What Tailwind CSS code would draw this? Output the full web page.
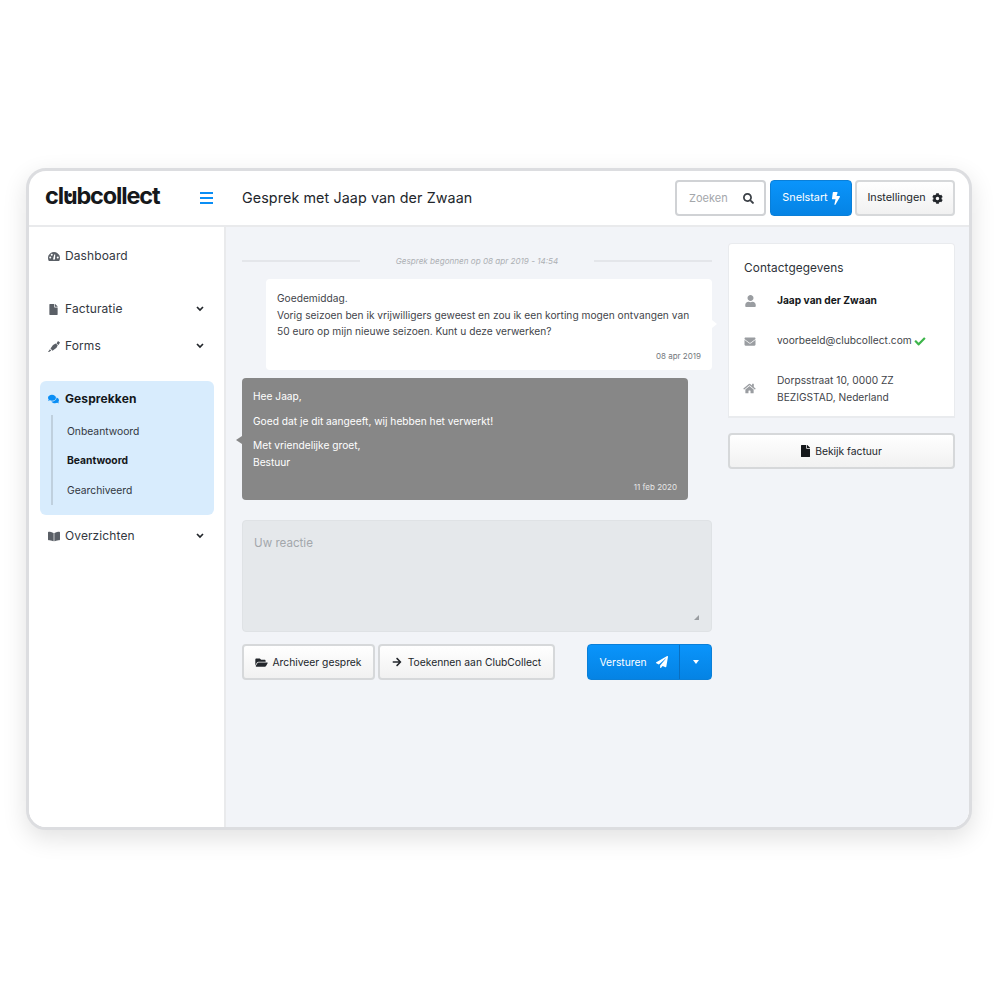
<!DOCTYPE html>
<html lang="nl">
<head>
<meta charset="utf-8">
<title>Gesprek</title>
<script src="https://cdn.jsdelivr.net/npm/@tailwindcss/browser@4"></script>
</head>
<body class="bg-white font-['Inter',sans-serif] text-[#33383f]">
<div class="w-[1000px] h-[1000px] pt-[168px] pl-[26px]">
  <div class="w-[946px] h-[662px] border-[3px] border-[#dcdde0] rounded-[20px] bg-white overflow-hidden shadow-[0_8px_24px_rgba(0,0,0,0.12)] flex flex-col">
    <header class="h-[56px] shrink-0 flex items-center border-b-2 border-[#e9eaec]">
      <div class="w-[172px] pl-[16px] text-[23.500px] font-bold tracking-[-1.150px] text-[#16181b] leading-none relative top-[-2px]">cl<span class="relative">u<span class="absolute left-[5px] top-[12px] w-[4px] h-[4px] rounded-full bg-[#16181b]"></span></span>bcollect</div>
      <svg class="w-[13px] h-[12px] ml-[-1px]" viewBox="0 0 13 12"><path d="M0 1h13M0 6h13M0 11h13" stroke="#0a8ef5" stroke-width="2"/></svg>
      <h1 class="ml-[29px] text-[14.300px] tracking-[0.1px] text-[#22262b]">Gesprek met Jaap van der Zwaan</h1>
      <div class="ml-auto mr-[14px] flex gap-[3px] items-center">
        <div class="w-[91px] h-[36px] mr-[1px] rounded-[4px] border-2 border-[#d0d2d5] bg-white flex items-center justify-between pl-[12px] pr-[10px] text-[11px] text-[#a4a7ab]">
          <span class="pt-[1px]">Zoeken</span>
          <svg class="w-[11px] h-[11px]" viewBox="0 0 512 512" fill="#3b4046"><path d="M505 442.700L405.300 343c-4.500-4.500-10.600-7-17-7H372c27.600-35.300 44-79.700 44-128C416 93.100 322.900 0 208 0S0 93.100 0 208s93.100 208 208 208c48.300 0 92.700-16.400 128-44v16.300c0 6.400 2.500 12.500 7 17l99.700 99.700c9.400 9.400 24.600 9.400 33.900 0l28.300-28.300c9.400-9.400 9.400-24.600.1-34zM208 336c-70.700 0-128-57.200-128-128 0-70.700 57.200-128 128-128 70.700 0 128 57.200 128 128 0 70.700-57.200 128-128 128z"/></svg>
        </div>
        <div class="w-[82px] h-[36px] rounded-[4px] bg-gradient-to-b from-[#0a94fb] to-[#0583e4] border border-[#0a7fd8] flex items-center justify-center gap-[4px] text-[10.800px] text-white">
          <span class="pt-[1px]">Snelstart</span>
          <svg class="w-[8px] h-[13px]" viewBox="0 0 320 512" fill="#fff"><path d="M296 160H180.600l42.600-129.800C227.200 15 215.700 0 200 0H56C44 0 33.800 8.900 32.200 20.800l-32 240C-1.700 275.200 9.500 288 24 288h118.700L96.600 482.500c-3.600 15.200 8 29.500 23.300 29.500 8.400 0 16.400-4.400 20.800-12l176-304c9.300-15.900-2.200-36-20.700-36z"/></svg>
        </div>
        <div class="w-[100px] h-[36px] rounded-[4px] border-2 border-[#d6d8da] bg-gradient-to-b from-white to-[#f1f1f1] flex items-center justify-center gap-[6px] text-[10.800px] text-[#22262b]">
          <span class="pt-[1px]">Instellingen</span>
          <svg class="w-[11px] h-[11px]" viewBox="0 0 512 512" fill="#22262b"><path d="M487.400 315.700l-42.600-24.600c4.300-23.200 4.300-47 0-70.200l42.600-24.600c4.900-2.800 7.100-8.600 5.500-14-11.100-35.600-30-67.800-54.700-94.600-3.800-4.100-10-5.100-14.800-2.300L380.800 110c-17.900-15.400-38.500-27.300-60.800-35.100V25.800c0-5.600-3.900-10.500-9.400-11.700-36.700-8.200-74.300-7.800-109.200 0-5.500 1.200-9.400 6.100-9.400 11.700V75c-22.200 7.900-42.800 19.800-60.800 35.100L88.700 85.500c-4.900-2.800-11-1.900-14.800 2.300-24.700 26.700-43.600 58.900-54.700 94.600-1.700 5.400.6 11.200 5.500 14L67.300 221c-4.300 23.200-4.300 47 0 70.200l-42.600 24.600c-4.900 2.800-7.100 8.600-5.500 14 11.100 35.600 30 67.800 54.700 94.600 3.800 4.100 10 5.100 14.800 2.300l42.600-24.600c17.900 15.400 38.500 27.300 60.800 35.100v49.200c0 5.600 3.900 10.500 9.400 11.700 36.700 8.200 74.300 7.800 109.200 0 5.500-1.200 9.400-6.100 9.400-11.700v-49.200c22.200-7.900 42.800-19.800 60.800-35.100l42.600 24.600c4.900 2.800 11 1.900 14.800-2.300 24.700-26.700 43.600-58.900 54.700-94.600 1.500-5.500-.7-11.300-5.600-14.100zM256 336c-44.100 0-80-35.900-80-80s35.900-80 80-80 80 35.900 80 80-35.900 80-80 80z"/></svg>
        </div>
      </div>
    </header>

    <div class="flex flex-1 min-h-0">
      <aside class="w-[197px] shrink-0 border-r-2 border-[#e9eaec] bg-white text-[12px] tracking-[0.1px]">
        <div class="flex items-center h-[20px] mt-[19px] pl-[19px] gap-[5px]">
          <svg class="w-[12px] h-[11px]" viewBox="0 0 24 22" fill="#5a5f66"><path d="M12 2C5.400 2 0 7.400 0 14c0 2.200.6 4.200 1.600 6h20.800c1-1.800 1.600-3.800 1.600-6 0-6.600-5.400-12-12-12zM4.500 15a2 2 0 1 1 0-4 2 2 0 0 1 0 4zm3-5.500a2 2 0 1 1 0-4 2 2 0 0 1 0 4zM14 17h-4l2.500-10h2zm5.500-2a2 2 0 1 1 0-4 2 2 0 0 1 0 4z"/></svg>
          <span>Dashboard</span>
        </div>
        <div class="flex items-center h-[20px] mt-[33px] pl-[19px] gap-[6px]">
          <svg class="w-[11px] h-[11px]" viewBox="0 0 384 512" fill="#5a5f66"><path d="M224 136V0H24C10.700 0 0 10.700 0 24v464c0 13.300 10.700 24 24 24h336c13.300 0 24-10.700 24-24V160H248c-13.200 0-24-10.800-24-24zm160-14.100v6.100H256V0h6.100c6.400 0 12.500 2.500 17 7l97.900 98c4.500 4.500 7 10.600 7 16.900z"/></svg>
          <span>Facturatie</span>
          <svg class="w-[8px] h-[6px] ml-auto mr-[20px]" viewBox="0 0 8 6"><path d="M1 1l3 3 3-3" fill="none" stroke="#22262b" stroke-width="1.700"/></svg>
        </div>
        <div class="flex items-center h-[20px] mt-[17px] pl-[19px] gap-[5px]">
          <svg class="w-[12px] h-[11px]" viewBox="0 0 24 22" fill="#5a5f66"><path d="M20 0l4 3-3 5-4-3zM15.500 5l4 3.500-2.500 5-8 6-4-4.500 5-7zM3.800 16.500l2.700 2.700L2 22H0z"/></svg>
          <span>Forms</span>
          <svg class="w-[8px] h-[6px] ml-auto mr-[20px]" viewBox="0 0 8 6"><path d="M1 1l3 3 3-3" fill="none" stroke="#22262b" stroke-width="1.700"/></svg>
        </div>
        <section class="mx-[11px] mt-[25px] w-[174px] h-[134px] rounded-[6px] bg-[#d8ecfd] pt-[8px]">
          <div class="flex items-center h-[20px] pl-[8px] gap-[6px] font-bold text-[#14171a]">
            <svg class="w-[11px] h-[10px]" viewBox="0 0 576 512" fill="#0a8ef5"><path d="M416 192c0-88.400-93.100-160-208-160S0 103.600 0 192c0 34.300 14.100 65.900 38 92-13.400 30.200-35.500 54.200-35.800 54.500-2.200 2.300-2.800 5.700-1.500 8.700S4.800 352 8 352c36.600 0 66.900-12.300 88.700-25 32.200 15.700 70.300 25 111.300 25 114.900 0 208-71.600 208-160zm122 220c23.900-26 38-57.700 38-92 0-66.900-53.500-124.200-129.300-148.100.9 6.600 1.300 13.300 1.300 20.100 0 105.900-107.700 192-240 192-10.800 0-21.300-.8-31.700-1.900C207.800 439.600 281.800 480 368 480c41 0 79.100-9.200 111.300-25 21.800 12.700 52.100 25 88.700 25 3.200 0 6.100-1.900 7.300-4.800 1.300-2.900.7-6.300-1.500-8.700-.3-.3-22.400-24.200-35.800-54.500z"/></svg>
            <span>Gesprekken</span>
          </div>
          <ul class="ml-[11px] mt-[6px] w-[150px] h-[90px] border-l-2 border-[#bfd0de] pl-[14px] pt-[2px] text-[10.300px] tracking-normal flex flex-col justify-around">
            <li>Onbeantwoord</li>
            <li class="font-bold text-[#14171a]">Beantwoord</li>
            <li>Gearchiveerd</li>
          </ul>
        </section>
        <div class="flex items-center h-[20px] mt-[11px] pl-[19px] gap-[5px]">
          <svg class="w-[12px] h-[11px]" viewBox="0 0 576 512" fill="#5a5f66"><path d="M542.220 32.050c-54.800 3.110-163.720 14.430-230.960 55.590-4.640 2.840-7.270 7.890-7.270 13.170v363.870c0 11.550 12.630 18.850 23.280 13.490 69.180-34.820 169.230-44.320 218.700-46.920 16.890-.89 30.020-14.430 30.020-30.660V62.750c.01-17.710-15.350-31.740-33.770-30.700zM264.730 87.640C197.500 46.480 88.580 35.170 33.780 32.050 15.360 31.010 0 45.040 0 62.750V400.600c0 16.240 13.130 29.780 30.020 30.660 49.490 2.600 149.590 12.110 218.770 46.950 10.620 5.350 23.210-1.940 23.210-13.460V100.630c0-5.290-2.620-10.140-7.270-12.990z"/></svg>
          <span>Overzichten</span>
          <svg class="w-[8px] h-[6px] ml-auto mr-[20px]" viewBox="0 0 8 6"><path d="M1 1l3 3 3-3" fill="none" stroke="#22262b" stroke-width="1.700"/></svg>
        </div>
      </aside>

      <main class="flex-1 bg-[#f2f4f8] pl-[16px] flex gap-[16px]">
        <div class="w-[470px] shrink-0 flex flex-col">
          <div class="flex items-center mt-[24px] h-[20px] text-[8.100px] italic text-[#adb0b4] justify-between">
            <span class="w-[118px] h-[2px] bg-[#e4e6ea]"></span>
            <span>Gesprek begonnen op 08 apr 2019 - 14:54</span>
            <span class="w-[118px] h-[2px] bg-[#e4e6ea]"></span>
          </div>
          <div class="relative ml-[24px] w-[446px] h-[91px] mt-[8px] rounded-[4px] bg-white pl-[11px] pt-[11px] text-[10.200px] leading-[16.500px] text-[#3f444a]">
            <p>Goedemiddag.</p>
            <p>Vorig seizoen ben ik vrijwilligers geweest en zou ik een korting mogen ontvangen van</p>
            <p>50 euro op mijn nieuwe seizoen. Kunt u deze verwerken?</p>
            <p class="absolute right-[11px] bottom-[6px] text-[8px] text-[#74787d]">08 apr 2019</p>
            <span class="absolute right-[-5px] top-[41px] border-y-[4px] border-l-[5px] border-y-transparent border-l-white"></span>
          </div>
          <div class="relative w-[446px] h-[122px] mt-[8px] rounded-[4px] bg-[#878787] pl-[11px] pt-[10px] text-[10.200px] leading-[16.500px] text-white">
            <p>Hee Jaap,</p>
            <p class="mt-[8px]">Goed dat je dit aangeeft, wij hebben het verwerkt!</p>
            <p class="mt-[8px]">Met vriendelijke groet,</p>
            <p>Bestuur</p>
            <p class="absolute right-[11px] bottom-[5px] text-[8px] text-[#e6e6e6]">11 feb 2020</p>
            <span class="absolute left-[-6px] top-[58px] border-y-[4px] border-r-[6px] border-y-transparent border-r-[#878787]"></span>
          </div>
          <div class="relative w-[470px] h-[112px] mt-[20px] rounded-[4px] bg-[#e5e8eb] border border-[#dfe2e5] pl-[11px] pt-[14px] text-[11.600px] text-[#a3a7ab]">
            Uw reactie
            <svg class="absolute right-[12px] bottom-[11px] w-[5px] h-[5px]" viewBox="0 0 5 5"><path d="M5 0v5H0z" fill="#9a9da1"/></svg>
          </div>
          <div class="flex mt-[12px] gap-[3px] text-[10.300px] text-[#22262b]">
            <div class="w-[133px] h-[36px] rounded-[4px] border-2 border-[#d6d8da] bg-gradient-to-b from-white to-[#f1f1f1] flex items-center justify-center gap-[4px]">
              <svg class="w-[13px] h-[11px]" viewBox="0 0 576 512" fill="#22262b"><path d="M572.694 292.093L500.270 416.248A63.997 63.997 0 0 1 444.989 448H45.025c-18.523 0-30.064-20.093-20.731-36.093l72.424-124.155A64 64 0 0 1 152 256h399.964c18.523 0 30.064 20.093 20.730 36.093zM152 224h328v-48c0-26.510-21.490-48-48-48H272l-64-64H48C21.490 64 0 85.490 0 112v278.046l69.077-118.418C86.214 242.250 117.989 224 152 224z"/></svg>
              <span class="pt-[1px]">Archiveer gesprek</span>
            </div>
            <div class="w-[177px] h-[36px] rounded-[4px] border-2 border-[#d6d8da] bg-gradient-to-b from-white to-[#f1f1f1] flex items-center justify-center gap-[6px]">
              <svg class="w-[10px] h-[10px]" viewBox="0 0 448 512" fill="#22262b"><path d="M190.500 66.900l22.200-22.200c9.400-9.400 24.600-9.400 33.900 0L441 239c9.400 9.400 9.400 24.600 0 33.900L246.600 467.300c-9.400 9.400-24.600 9.400-33.900 0l-22.200-22.200c-9.500-9.500-9.300-25 .4-34.300L311.400 296H24c-13.300 0-24-10.700-24-24v-32c0-13.300 10.700-24 24-24h287.400L190.900 101.200c-9.800-9.300-10-24.800-.4-34.300z"/></svg>
              <span class="pt-[1px]">Toekennen aan ClubCollect</span>
            </div>
            <div class="ml-[29px] w-[125px] h-[36px] rounded-[4px] bg-gradient-to-b from-[#0a94fb] to-[#0583e4] border border-[#0a7fd8] flex text-white">
              <div class="w-[92px] flex items-center justify-center gap-[9px] border-r border-[#0a6fc0]">
                <span class="pt-[1px]">Versturen</span>
                <svg class="w-[12px] h-[12px]" viewBox="0 0 512 512" fill="#fff"><path d="M476 3.200L12.500 270.600c-18.100 10.400-15.800 35.600 2.200 43.200L121 358.400l287.300-253.200c5.500-4.900 13.300 2.600 8.600 8.300L176 407v80.500c0 23.600 28.500 32.900 42.500 15.800L282 426l124.600 52.200c14.200 6 30.400-2.900 33-18.200l72-432C515 7.800 493.300-6.800 476 3.200z"/></svg>
              </div>
              <div class="flex-1 flex items-center justify-center">
                <span class="border-x-[3.500px] border-t-[4px] border-x-transparent border-t-white"></span>
              </div>
            </div>
          </div>
        </div>

        <div class="w-[227px] shrink-0 pt-[16px]">
          <div class="h-[175px] rounded-t-[4px] bg-white border border-[#e9ebee] border-b-2 overflow-hidden pl-[15px] pt-[16px] text-[10.200px] text-[#3f444a]">
            <h2 class="text-[11.800px] leading-[16px] text-[#2d3238] tracking-[0.1px]">Contactgegevens</h2>
            <div class="flex items-center mt-[17px] h-[16px]">
              <svg class="w-[11px] h-[12px] ml-[1px]" viewBox="0 0 448 512" fill="#9a9da1"><path d="M224 256c70.700 0 128-57.300 128-128S294.700 0 224 0 96 57.300 96 128s57.300 128 128 128zm89.600 32h-16.700c-22.200 10.200-46.900 16-72.900 16s-50.600-5.800-72.900-16h-16.700C60.200 288 0 348.200 0 422.400V464c0 26.500 21.500 48 48 48h352c26.500 0 48-21.500 48-48v-41.600c0-74.200-60.200-134.400-134.400-134.400z"/></svg>
              <span class="ml-[21px] font-bold text-[#14171a]">Jaap van der Zwaan</span>
            </div>
            <div class="flex items-center mt-[24px] h-[16px]">
              <svg class="w-[12px] h-[11px]" viewBox="0 0 512 512" fill="#9a9da1"><path d="M502.300 190.800c3.900-3.100 9.700-.2 9.700 4.700V400c0 26.500-21.500 48-48 48H48c-26.500 0-48-21.500-48-48V195.600c0-5 5.700-7.800 9.700-4.700 22.400 17.400 52.100 39.500 154.100 113.600 21.100 15.400 56.700 47.800 92.200 47.600 35.700.3 72-32.800 92.300-47.600 102-74.100 131.600-96.300 154-113.700zM256 320c23.200.4 56.600-29.200 73.400-41.400 132.700-96.300 142.800-104.700 173.400-128.700 5.800-4.500 9.200-11.500 9.200-18.900v-19c0-26.500-21.500-48-48-48H48C21.500 64 0 85.500 0 112v19c0 7.400 3.400 14.300 9.200 18.900 30.600 23.900 40.700 32.400 173.400 128.700 16.800 12.200 50.200 41.800 73.400 41.400z"/></svg>
              <span class="ml-[21px]">voorbeeld@clubcollect.com</span>
              <svg class="w-[12px] h-[11px] ml-[2px]" viewBox="0 0 512 512" fill="#3cb54a"><path d="M173.898 439.404l-166.400-166.400c-9.997-9.997-9.997-26.206 0-36.204l36.203-36.204c9.997-9.998 26.207-9.998 36.204 0L192 312.690 432.095 72.596c9.997-9.997 26.207-9.997 36.204 0l36.203 36.204c9.997 9.997 9.997 26.206 0 36.204l-294.400 294.401c-9.998 9.997-26.207 9.997-36.204-.001z"/></svg>
            </div>
            <div class="flex items-center mt-[23px]">
              <svg class="w-[13px] h-[11px] ml-[-1px]" viewBox="0 0 576 512" fill="#9a9da1"><path d="M280.370 148.260L96 300.110V464a16 16 0 0 0 16 16l112.060-.29a16 16 0 0 0 15.920-16V368a16 16 0 0 1 16-16h64a16 16 0 0 1 16 16v95.640a16 16 0 0 0 16 16.050L464 480a16 16 0 0 0 16-16V300L295.670 148.260a12.190 12.190 0 0 0-15.300 0zM571.600 251.470L488 182.560V44.050a12 12 0 0 0-12-12h-56a12 12 0 0 0-12 12v72.610L318.470 43a48 48 0 0 0-61 0L4.340 251.470a12 12 0 0 0-1.600 16.900l25.500 31A12 12 0 0 0 45.150 301l235.220-193.740a12.190 12.190 0 0 1 15.300 0L530.900 301a12 12 0 0 0 16.900-1.600l25.500-31a12 12 0 0 0-1.700-16.930z"/></svg>
              <div class="ml-[21px] leading-[16.500px]">
                <p>Dorpsstraat 10, 0000 ZZ</p>
                <p>BEZIGSTAD, Nederland</p>
              </div>
            </div>
          </div>
          <div class="mt-[15px] h-[36px] rounded-[4px] border-2 border-[#d6d8da] bg-gradient-to-b from-white to-[#f1f1f1] flex items-center justify-center gap-[5px] text-[10.300px] text-[#22262b]">
            <svg class="w-[9px] h-[12px]" viewBox="0 0 384 512" fill="#14171a"><path d="M224 136V0H24C10.700 0 0 10.700 0 24v464c0 13.300 10.700 24 24 24h336c13.300 0 24-10.700 24-24V160H248c-13.200 0-24-10.800-24-24zm160-14.100v6.100H256V0h6.100c6.400 0 12.500 2.500 17 7l97.900 98c4.500 4.500 7 10.600 7 16.900z"/></svg>
            <span class="pt-[1px]">Bekijk factuur</span>
          </div>
        </div>
      </main>
    </div>
  </div>
</div>
</body>
</html>
